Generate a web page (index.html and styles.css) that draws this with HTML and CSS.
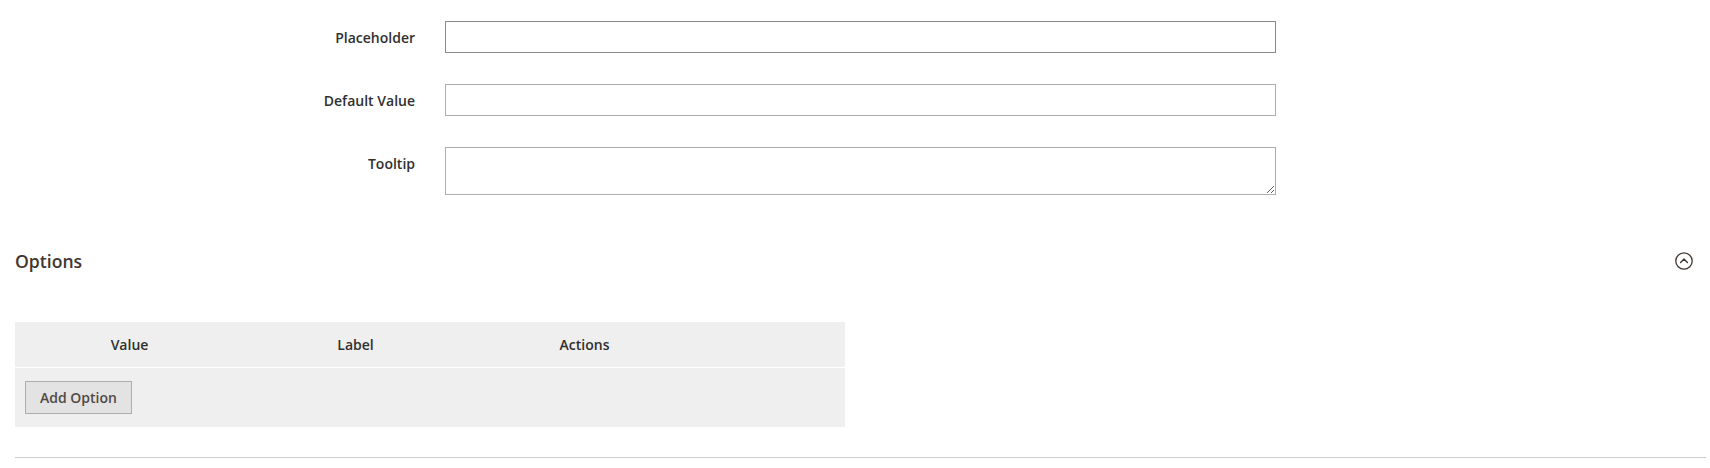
FILE: index.html
```html
<!DOCTYPE html>
<html lang="en">
<head>
<meta charset="utf-8">
<title>Field options</title>
<link rel="stylesheet" href="styles.css">
</head>
<body>
<div class="page">
  <div class="fields">
    <div class="field">
      <label class="field-label" for="f-placeholder">Placeholder</label>
      <input class="control control-active" id="f-placeholder" type="text">
    </div>
    <div class="field">
      <label class="field-label" for="f-default">Default Value</label>
      <input class="control" id="f-default" type="text">
    </div>
    <div class="field">
      <label class="field-label" for="f-tooltip">Tooltip</label>
      <textarea class="control control-area" id="f-tooltip"></textarea>
    </div>
  </div>

  <section class="fieldset">
    <div class="fieldset-head">
      <h3 class="fieldset-title">Options</h3>
      <span class="collapse-icon" aria-hidden="true">
        <svg width="18" height="18" viewBox="0 0 18 18">
          <circle cx="9" cy="9" r="8.2" fill="none" stroke="#41362f" stroke-width="1.3"/>
          <path d="M5.6 10.4 L9 7.1 L12.4 10.4" fill="none" stroke="#41362f" stroke-width="1.4" stroke-linecap="round" stroke-linejoin="round"/>
        </svg>
      </span>
    </div>

    <div class="dyn-table">
      <div class="dyn-head">
        <div class="dyn-th">Value</div>
        <div class="dyn-th">Label</div>
        <div class="dyn-th">Actions</div>
        <div class="dyn-th"></div>
      </div>
      <div class="dyn-foot">
        <button class="btn" type="button">Add Option</button>
      </div>
    </div>
  </section>

  <hr class="divider">
</div>
</body>
</html>
```

FILE: styles.css
```css
* {
  box-sizing: border-box;
}

html, body {
  margin: 0;
  padding: 0;
  background: #ffffff;
}

body {
  font-family: "Open Sans", "Liberation Sans", sans-serif;
  font-size: 14px;
  color: #303030;
}

.page {
  width: 1710px;
  padding-top: 21px;
}

.fields {
  display: flex;
  flex-direction: column;
  gap: 30px;
}

.field {
  display: grid;
  grid-template-columns: 415px 831px;
  column-gap: 30px;
  align-items: start;
}

.field-label {
  padding-top: 1px;
  text-align: right;
  font-weight: 600;
  font-size: 14px;
  line-height: 32px;
  color: #303030;
}

.control {
  display: block;
  width: 831px;
  height: 32px;
  margin: 0;
  padding: 0 10px;
  border: 1px solid #adadad;
  border-radius: 0;
  background: #ffffff;
  font-family: inherit;
  font-size: 14px;
  color: #303030;
  outline: none;
}

.control-active {
  border-color: #8a8a8a;
}

.control-area {
  height: 48px;
  padding: 6px 10px;
  resize: vertical;
}

.fieldset {
  margin-top: 50px;
}

.fieldset-head {
  display: flex;
  align-items: center;
  justify-content: space-between;
  height: 32px;
  padding: 0 17px 0 15px;
}

.fieldset-title {
  margin: 0;
  font-size: 17.6px;
  font-weight: 600;
  line-height: 32px;
  color: #41362f;
}

.collapse-icon {
  display: flex;
  width: 18px;
  height: 18px;
}

.dyn-table {
  width: 830px;
  margin: 45px 0 0 15px;
  background: #efefef;
}

.dyn-head {
  display: grid;
  grid-template-columns: 229px 223px 235px 1fr;
  height: 46px;
  border-bottom: 1px solid #ffffff;
}

.dyn-th {
  text-align: center;
  font-weight: 600;
  font-size: 14px;
  line-height: 45px;
  color: #303030;
}

.dyn-foot {
  padding: 13px 10px 13px;
}

.btn {
  display: block;
  height: 33px;
  padding: 0 14px;
  border: 1px solid #adadad;
  border-radius: 0;
  background: #e3e3e3;
  font-family: inherit;
  font-size: 14px;
  font-weight: 600;
  color: #514943;
  cursor: pointer;
}

.divider {
  margin: 30px 4px 0 15px;
  height: 0;
  border: 0;
  border-top: 1px solid #cccccc;
}
```
